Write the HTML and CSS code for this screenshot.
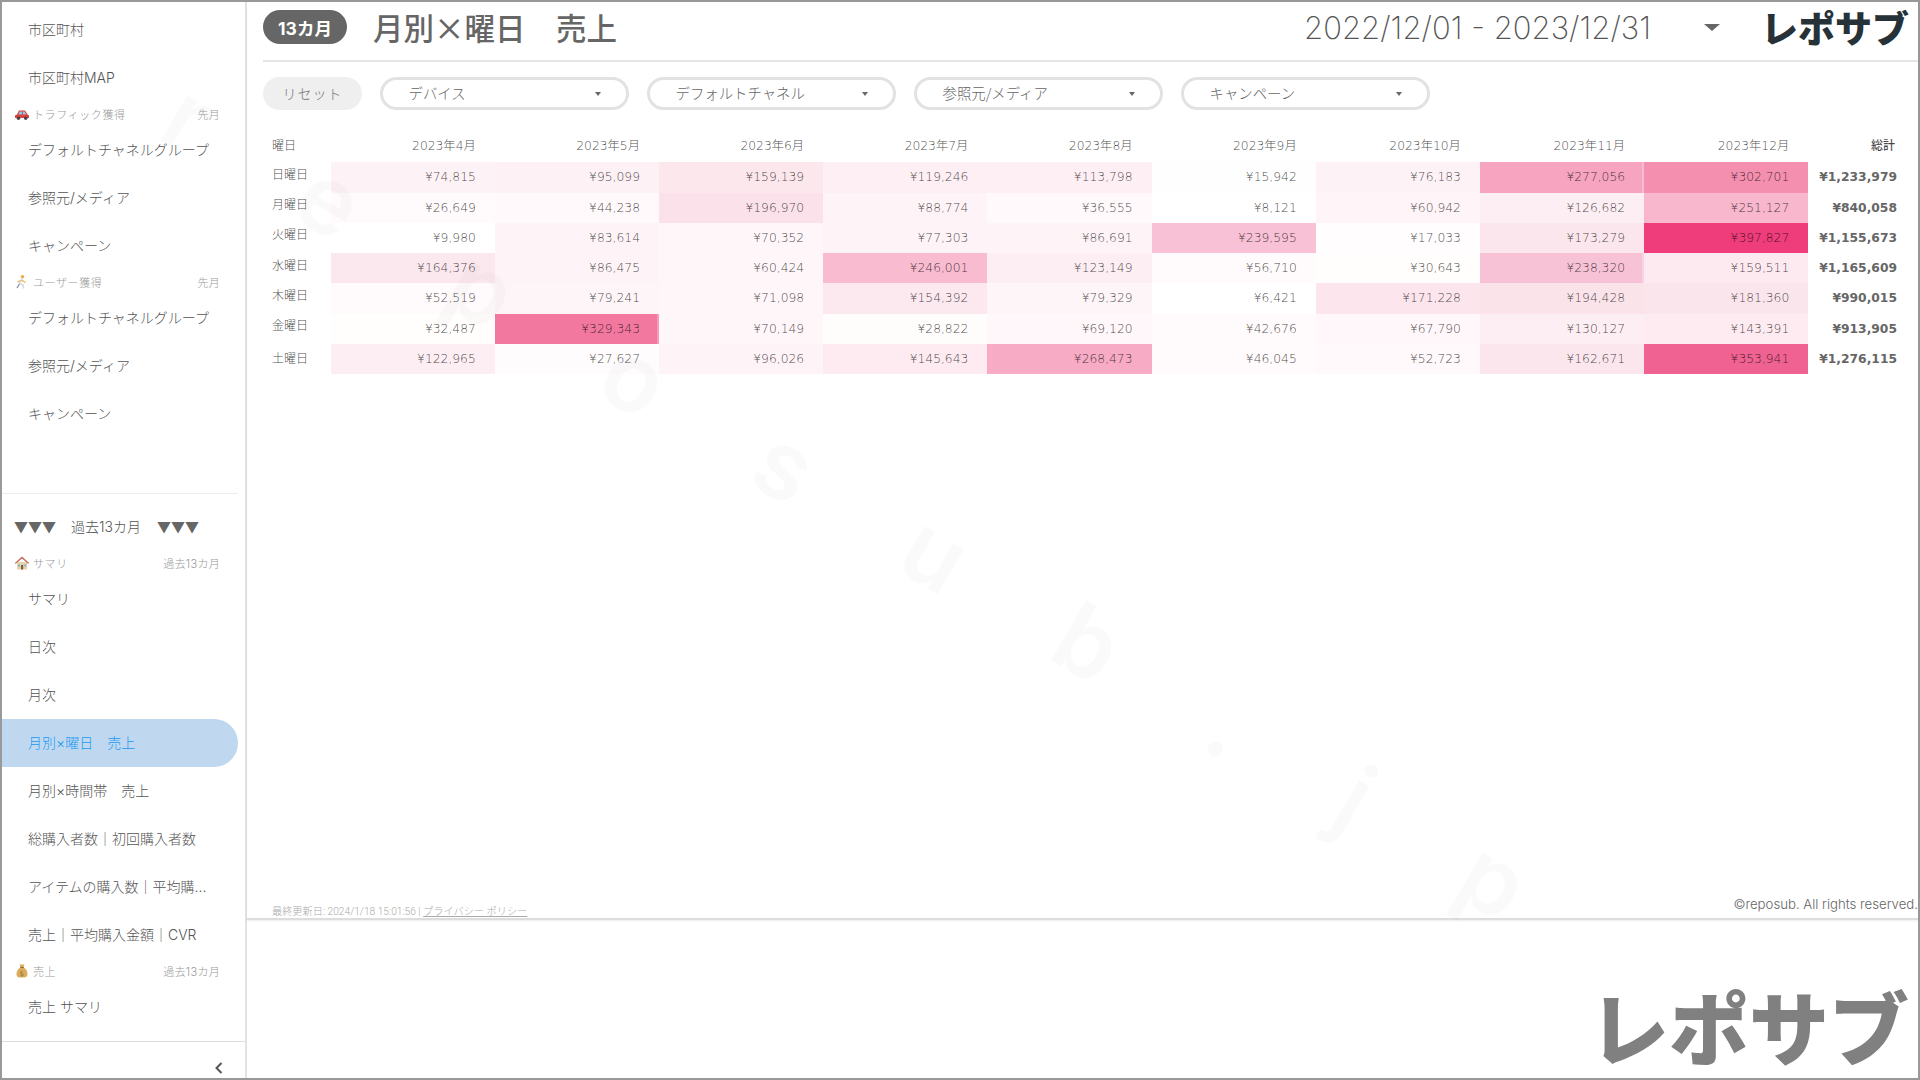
FILE: index.html
```html
<!DOCTYPE html>
<html lang="ja">
<head>
<meta charset="utf-8">
<title>月別×曜日 売上</title>
<link rel="stylesheet" href="styles.css">
</head>
<body>
<div class="app">
  <aside class="sidebar">
    <nav class="nav">
      <a class="item">市区町村</a>
      <a class="item">市区町村MAP</a>
      <div class="section"><svg class="emoji" viewBox="0 0 16 16"><path d="M1 12V9.500L3 8.600 5 4.600h6l2.600 4 1.400.8V12z" fill="#d8403c"/><path d="M5.800 5.400h2.200v3H4.300zM8.800 5.400h1.800l1.800 3H8.800z" fill="#8fc7e8"/><circle cx="4.500" cy="12.300" r="1.700" fill="#444"/><circle cx="11.700" cy="12.300" r="1.700" fill="#444"/></svg><span>トラフィック獲得</span><span class="when">先月</span></div>
      <a class="item">デフォルトチャネルグループ</a>
      <a class="item">参照元/メディア</a>
      <a class="item">キャンペーン</a>
      <div class="section"><svg class="emoji" viewBox="0 0 16 16"><circle cx="8.500" cy="2.800" r="1.800" fill="#e9b04e"/><path d="M8 5 5.500 9l3.500 2 .5 3.500" fill="none" stroke="#d9dee2" stroke-width="1.800"/><path d="M7.500 6 11.500 8.500M6.500 6.500 3.500 8" fill="none" stroke="#e9b04e" stroke-width="1.200"/><path d="M5.500 10 3 14" fill="none" stroke="#7d8f9c" stroke-width="1.300"/></svg><span>ユーザー獲得</span><span class="when">先月</span></div>
      <a class="item">デフォルトチャネルグループ</a>
      <a class="item">参照元/メディア</a>
      <a class="item">キャンペーン</a>
      <hr class="nav-rule">
      <div class="period"><span class="tri">▼▼▼</span><span class="period-label">過去13カ月</span><span class="tri">▼▼▼</span></div>
      <div class="section"><svg class="emoji" viewBox="0 0 16 16"><path d="M3 7h10v7.500H3z" fill="#e6d3a8"/><path d="M.8 8 8 1.500 15.200 8l-1 .8L8 3.500 1.800 8.800z" fill="#c4685a"/><path d="M7 10h2.200v4.500H7z" fill="#8a5a3c"/><path d="M4 9.500h2v2H4zM10.200 9.500h2v2h-2z" fill="#79b8d8"/></svg><span>サマリ</span><span class="when">過去13カ月</span></div>
      <a class="item">サマリ</a>
      <a class="item">日次</a>
      <a class="item">月次</a>
      <a class="item active">月別×曜日　売上</a>
      <a class="item">月別×時間帯　売上</a>
      <a class="item">総購入者数｜初回購入者数</a>
      <a class="item">アイテムの購入数｜平均購...</a>
      <a class="item">売上｜平均購入金額｜CVR</a>
      <div class="section"><svg class="emoji" viewBox="0 0 16 16"><path d="M5.500 1.500h5L9.500 4.500c3 1.500 4 4.500 4 6.500 0 3-2 3.500-5.500 3.500S2.500 14 2.500 11c0-2 1-5 4-6.500z" fill="#d9ad5c"/><path d="M6.200 4.500h3.600" stroke="#8a6a30" stroke-width="1"/><text x="8" y="12.500" font-size="7" text-anchor="middle" fill="#6b4f1e" font-family="DejaVu Sans">$</text></svg><span>売上</span><span class="when">過去13カ月</span></div>
      <a class="item">売上 サマリ</a>
    </nav>
    <div class="side-foot">
      <svg class="chevron" viewBox="0 0 10 14"><path d="M7.500 2 2.500 7l5 5" fill="none" stroke="#555" stroke-width="2"/></svg>
    </div>
  </aside>

  <main class="main">
    <section class="report">
      <header class="head">
        <span class="pill">13カ月</span>
        <h1 class="title">月別×曜日　売上</h1>
        <span class="date">2022/12/01 - 2023/12/31</span>
        <span class="date-arrow"></span>
        <span class="logo">レポサブ</span>
      </header>
      <div class="filters">
        <button class="reset">リセット</button>
        <div class="select"><span>デバイス</span><i class="caret"></i></div>
        <div class="select"><span>デフォルトチャネル</span><i class="caret"></i></div>
        <div class="select"><span>参照元/メディア</span><i class="caret"></i></div>
        <div class="select"><span>キャンペーン</span><i class="caret"></i></div>
      </div>
      <table class="grid">
        <thead>
          <tr><th class="day">曜日</th><th>2023年4月</th><th>2023年5月</th><th>2023年6月</th><th>2023年7月</th><th>2023年8月</th><th>2023年9月</th><th>2023年10月</th><th>2023年11月</th><th>2023年12月</th><th class="sum">総計</th></tr>
        </thead>
        <tbody>
          <tr><th class="day">日曜日</th><td style="background:#fdf3f6">¥74,815</td><td style="background:#fdf1f5">¥95,099</td><td style="background:#fce7ed">¥159,139</td><td style="background:#fdeff3">¥119,246</td><td style="background:#fdeff3">¥113,798</td><td style="background:#fffeff">¥15,942</td><td style="background:#fdf3f6">¥76,183</td><td class="hot" style="background:#f6a4bf">¥277,056</td><td style="background:#f58fb0">¥302,701</td><td class="total">¥1,233,979</td></tr>
          <tr><th class="day">月曜日</th><td style="background:#fffbfc">¥26,649</td><td style="background:#fff9fb">¥44,238</td><td style="background:#fbe2ea">¥196,970</td><td style="background:#fef3f6">¥88,774</td><td style="background:#fff9fb">¥36,555</td><td style="background:#ffffff">¥8,121</td><td style="background:#fff5f8">¥60,942</td><td style="background:#fdeef3">¥126,682</td><td style="background:#f8b7cd">¥251,127</td><td class="total">¥840,058</td></tr>
          <tr><th class="day">火曜日</th><td style="background:#ffffff">¥9,980</td><td style="background:#fef4f7">¥83,614</td><td style="background:#fff6f9">¥70,352</td><td style="background:#fef4f7">¥77,303</td><td style="background:#fef4f7">¥86,691</td><td style="background:#f9c1d5">¥239,595</td><td style="background:#fffdfd">¥17,033</td><td style="background:#fbe6ed">¥173,279</td><td style="background:#ee3d7a">¥397,827</td><td class="total">¥1,155,673</td></tr>
          <tr><th class="day">水曜日</th><td style="background:#fbe7ee">¥164,376</td><td style="background:#fef4f7">¥86,475</td><td style="background:#fff6f9">¥60,424</td><td style="background:#f8bbd0">¥246,001</td><td style="background:#fdeef3">¥123,149</td><td style="background:#fffafb">¥56,710</td><td style="background:#fffefc">¥30,643</td><td class="hot" style="background:#f8c2d6">¥238,320</td><td style="background:#fde9f0">¥159,511</td><td class="total">¥1,165,609</td></tr>
          <tr><th class="day">木曜日</th><td style="background:#fffafb">¥52,519</td><td style="background:#fef5f8">¥79,241</td><td style="background:#fff6f9">¥71,098</td><td style="background:#fce8ef">¥154,392</td><td style="background:#fef5f8">¥79,329</td><td style="background:#ffffff">¥6,421</td><td style="background:#fce5ec">¥171,228</td><td style="background:#fbe3ea">¥194,428</td><td style="background:#fbe5ec">¥181,360</td><td class="total">¥990,015</td></tr>
          <tr><th class="day">金曜日</th><td style="background:#fffefc">¥32,487</td><td class="hot" style="background:#f378a0">¥329,343</td><td style="background:#fff6f9">¥70,149</td><td style="background:#fffcfc">¥28,822</td><td style="background:#fff7f9">¥69,120</td><td style="background:#fffafb">¥42,676</td><td style="background:#fff7f9">¥67,790</td><td style="background:#fdeef3">¥130,127</td><td style="background:#fdebf1">¥143,391</td><td class="total">¥913,905</td></tr>
          <tr class="last"><th class="day">土曜日</th><td style="background:#fdeef3">¥122,965</td><td style="background:#fffcfd">¥27,627</td><td style="background:#fef3f6">¥96,026</td><td style="background:#fdebf1">¥145,643</td><td style="background:#f7abc4">¥268,473</td><td style="background:#fffafb">¥46,045</td><td style="background:#fff9fb">¥52,723</td><td style="background:#fbe6ed">¥162,671</td><td style="background:#f06292">¥353,941</td><td class="total">¥1,276,115</td></tr>
        </tbody>
      </table>
      <footer class="report-foot">
        <span class="updated">最終更新日: 2024/1/18 15:01:56 | <a class="policy">プライバシー ポリシー</a></span>
        <span class="copy">©reposub. All rights reserved.</span>
      </footer>
    </section>
    <section class="brand"><span class="brand-logo">レポサブ</span></section>
  </main>
</div>
<div class="watermark" aria-hidden="true">reposub.jp</div>
</body>
</html>
```
FILE: styles.css
```css
* { box-sizing: border-box; }
html, body { margin: 0; height: 100%; }
body {
  background: #fff;
  font-family: "Inter", "Noto Sans CJK JP", sans-serif;
  color: #666;
  overflow: hidden;
}
.app {
  display: flex;
  height: 1080px;
  border: 2px solid #999;
}
.sidebar {
  width: 245px;
  flex: none;
  display: flex;
  flex-direction: column;
  border-right: 2px solid #e3e3e3;
}
.nav {
  flex: 1;
  padding-top: 4px;
  overflow: hidden;
}
.item {
  display: block;
  height: 48px;
  line-height: 47px;
  padding-left: 26px;
  width: 236px;
  font-size: 14px;
  font-weight: 300;
  color: #555;
  white-space: nowrap;
}
.item.active {
  background: #bfd8f0;
  color: #1a9bf0;
  border-radius: 0 24px 24px 0;
}
.section {
  display: flex;
  align-items: center;
  height: 24px;
  padding: 0 24px 0 12px;
  width: 242px;
  font-size: 11px;
  font-weight: 300;
  letter-spacing: .6px;
  color: #999;
}
.emoji { width: 16px; height: 16px; margin-right: 3px; flex: none; }
.when { margin-left: auto; letter-spacing: .3px; }
.nav-rule {
  border: 0;
  border-top: 1px solid #eee;
  margin: 55px 0 0;
  width: 236px;
}
.period {
  height: 57px;
  line-height: 64px;
  padding-left: 12px;
  font-size: 14px;
  font-weight: 300;
  color: #555;
  white-space: nowrap;
}
.period-label { margin: 0 16px 0 15px; }
.tri { font-family: "Noto Sans CJK JP", sans-serif; color: #666; }
.side-foot {
  height: 37px;
  flex: none;
  border-top: 1px solid #ddd;
  display: flex;
  justify-content: flex-end;
  align-items: flex-end;
  padding: 0 21px 3px 0;
}
.chevron { width: 10px; height: 14px; }

.main {
  flex: 1;
  min-width: 0;
  display: flex;
  flex-direction: column;
}
.report {
  height: 918px;
  flex: none;
  display: flex;
  flex-direction: column;
  border-bottom: 2px solid #ddd;
  box-shadow: 0 1px 2px rgba(0,0,0,.08);
}
.head {
  display: flex;
  align-items: center;
  height: 60px;
  margin-left: 16px;
  border-bottom: 2px solid #e5e5e5;
  padding: 0 9px 8px 0;
  flex: none;
}
.pill {
  width: 84px;
  height: 34px;
  border-radius: 17px;
  background: #666;
  color: #fff;
  font-size: 17.500px;
  font-weight: 700;
  display: flex;
  align-items: center;
  justify-content: center;
}
.title {
  margin: 0 0 0 26px;
  font-family: "Noto Sans CJK JP", sans-serif;
  font-size: 30.500px;
  font-weight: 500;
  line-height: 40px;
  color: #666;
}
.date {
  margin-left: auto;
  font-size: 31px;
  font-weight: 200;
  color: #555;
  white-space: nowrap;
}
.date-arrow {
  width: 0;
  height: 0;
  margin: 0 41px 0 53px;
  border-left: 8px solid transparent;
  border-right: 8px solid transparent;
  border-top: 7px solid #666;
}
.logo {
  font-family: "Noto Sans CJK JP", sans-serif;
  font-size: 37px;
  font-weight: 900;
  line-height: 40px;
  color: #263238;
}
.filters {
  display: flex;
  gap: 17.500px;
  margin: 15px 0 0 16px;
  flex: none;
}
.reset {
  width: 99px;
  height: 33px;
  border: 0;
  border-radius: 17px;
  background: #efefef;
  color: #777;
  font-family: "Noto Sans CJK JP", sans-serif;
  font-size: 14px;
  font-weight: 300;
  letter-spacing: 1px;
  padding: 0 0 2px;
}
.select {
  width: 249.500px;
  height: 33px;
  border: 3px solid #e2e2e2;
  border-radius: 17px;
  display: flex;
  align-items: center;
  justify-content: space-between;
  padding: 0 25px 2px 26px;
  font-family: "Noto Sans CJK JP", sans-serif;
  font-size: 14.400px;
  font-weight: 300;
  color: #666;
}
.caret {
  width: 0;
  height: 0;
  margin-top: 2px;
  border-left: 3.500px solid transparent;
  border-right: 3.500px solid transparent;
  border-top: 4px solid #666;
}
.grid {
  border-collapse: collapse;
  table-layout: fixed;
  width: 1655px;
  margin: 22px 0 0 17px;
  font-family: "DejaVu Sans", "Noto Sans CJK JP", sans-serif;
  font-size: 12.300px;
  color: rgba(0,0,0,.72);
}
.grid th, .grid td {
  height: 30.250px;
  padding: 0 19px 0 0;
  text-align: right;
  font-weight: 300;
  white-space: nowrap;
}
.grid th {
  width: 164.200px;
}
.grid thead th { padding-bottom: 5px; }
.grid th.day {
  width: 66.600px;
  text-align: left;
  padding: 0 0 8px 8px;
  font-family: "Noto Sans CJK JP", sans-serif;
  font-size: 12px;
}
.grid .last th.day { padding-bottom: 3px; }
.grid thead th.day { padding-bottom: 5px; }
.grid th.sum {
  width: auto;
  padding-right: 24px;
  font-family: "Noto Sans CJK JP", sans-serif;
  font-size: 12px;
  font-weight: 500;
}
.grid td.hot { box-shadow: inset -2px 0 0 rgba(255,255,255,.25); }
.grid td.total {
  font-weight: 700;
  padding-right: 22px;
  color: #666;
}
.report-foot {
  margin: auto 0 0 25px;
  display: flex;
  justify-content: space-between;
  align-items: flex-end;
  height: 24px;
}
.updated {
  font-family: "Roboto", "Noto Sans CJK JP", sans-serif;
  font-size: 10.200px;
  font-weight: 300;
  color: #aaa;
  line-height: 12px;
  margin-bottom: 0;
}
.policy { text-decoration: underline; }
.copy {
  font-size: 13.200px;
  font-weight: 300;
  color: #666;
  line-height: 16px;
  margin-bottom: 6px;
  white-space: nowrap;
}
.brand {
  flex: 1;
  display: flex;
  justify-content: flex-end;
  padding: 59px 9px 0 0;
}
.brand-logo {
  font-family: "Noto Sans CJK JP", sans-serif;
  font-size: 80px;
  font-weight: 900;
  line-height: 90px;
  color: #808080;
}
.watermark {
  position: absolute;
  left: 173px;
  top: 47px;
  transform: rotate(30.300deg);
  transform-origin: 0 60px;
  pointer-events: none;
  font-family: "Inter", sans-serif;
  font-size: 96px;
  font-weight: 600;
  line-height: 120px;
  letter-spacing: 118px;
  white-space: nowrap;
  color: rgba(0,0,0,.02);
}
```
